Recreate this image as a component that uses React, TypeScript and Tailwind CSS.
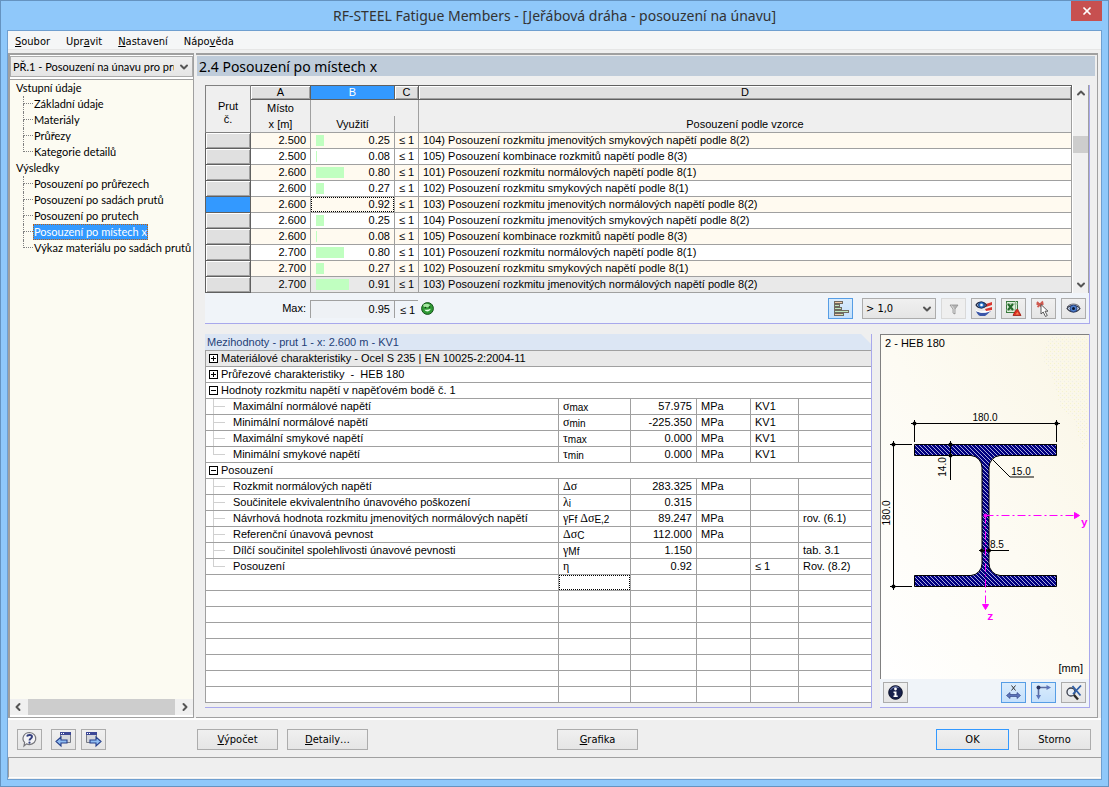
import React from "react";
import { ChevronDown, ChevronLeft, ChevronRight, ChevronUp, X } from "lucide-react";

interface CheckRow { x: string; ratio: number; text: string; selected?: boolean }
interface Detail { label: string; symbol: React.ReactNode; value: string; unit?: string; lc?: string; note?: string }
interface Group { title: string; open: boolean; items: Detail[] }

const F101 = "101) Posouzení rozkmitu normálových napětí podle 8(1)";
const F102 = "102) Posouzení rozkmitu smykových napětí podle 8(1)";
const F103 = "103) Posouzení rozkmitu jmenovitých normálových napětí podle 8(2)";
const F104 = "104) Posouzení rozkmitu jmenovitých smykových napětí podle 8(2)";
const F105 = "105) Posouzení kombinace rozkmitů napětí podle 8(3)";

const checks: CheckRow[] = [
  { x: "2.500", ratio: 0.25, text: F104 },
  { x: "2.500", ratio: 0.08, text: F105 },
  { x: "2.600", ratio: 0.8, text: F101 },
  { x: "2.600", ratio: 0.27, text: F102 },
  { x: "2.600", ratio: 0.92, text: F103, selected: true },
  { x: "2.600", ratio: 0.25, text: F104 },
  { x: "2.600", ratio: 0.08, text: F105 },
  { x: "2.700", ratio: 0.8, text: F101 },
  { x: "2.700", ratio: 0.27, text: F102 },
  { x: "2.700", ratio: 0.91, text: F103 },
];

const tree = [
  { title: "Vstupní údaje", items: ["Základní údaje", "Materiály", "Průřezy", "Kategorie detailů"] },
  {
    title: "Výsledky",
    items: [
      "Posouzení po průřezech",
      "Posouzení po sadách prutů",
      "Posouzení po prutech",
      "Posouzení po místech x",
      "Výkaz materiálu po sadách prutů",
    ],
  },
];
const activeItem = "Posouzení po místech x";

const Sub = ({ children }: { children: React.ReactNode }) => (
  <sub className="static align-[-1px] font-['Liberation_Sans',sans-serif] text-[10px] leading-none">{children}</sub>
);

const groups: Group[] = [
  { title: "Materiálové charakteristiky - Ocel S 235 | EN 10025-2:2004-11", open: false, items: [] },
  { title: "Průřezové charakteristiky  -  HEB 180", open: false, items: [] },
  {
    title: "Hodnoty rozkmitu napětí v napěťovém bodě č. 1",
    open: true,
    items: [
      { label: "Maximální normálové napětí", symbol: <>σ<Sub>max</Sub></>, value: "57.975", unit: "MPa", lc: "KV1" },
      { label: "Minimální normálové napětí", symbol: <>σ<Sub>min</Sub></>, value: "-225.350", unit: "MPa", lc: "KV1" },
      { label: "Maximální smykové napětí", symbol: <>τ<Sub>max</Sub></>, value: "0.000", unit: "MPa", lc: "KV1" },
      { label: "Minimální smykové napětí", symbol: <>τ<Sub>min</Sub></>, value: "0.000", unit: "MPa", lc: "KV1" },
    ],
  },
  {
    title: "Posouzení",
    open: true,
    items: [
      { label: "Rozkmit normálových napětí", symbol: <>Δσ</>, value: "283.325", unit: "MPa" },
      { label: "Součinitele ekvivalentního únavového poškození", symbol: <>λ<Sub>i</Sub></>, value: "0.315" },
      { label: "Návrhová hodnota rozkmitu jmenovitých normálových napětí", symbol: <>γ<Sub>Ff</Sub> Δσ<Sub>E,2</Sub></>, value: "89.247", unit: "MPa", note: "rov. (6.1)" },
      { label: "Referenční únavová pevnost", symbol: <>Δσ<Sub>C</Sub></>, value: "112.000", unit: "MPa" },
      { label: "Dílčí součinitel spolehlivosti únavové pevnosti", symbol: <>γ<Sub>Mf</Sub></>, value: "1.150", note: "tab. 3.1" },
      { label: "Posouzení", symbol: <>η</>, value: "0.92", lc: "≤ 1", note: "Rov. (8.2)" },
    ],
  },
];

const iconBtn = "flex h-[21px] w-[25px] shrink-0 items-center justify-center border border-[#acacac] bg-linear-to-b from-[#f0f0f0] to-[#e5e5e5]";
const iconBtnOn = "flex h-[21px] w-[25px] shrink-0 items-center justify-center border border-[#569de5] bg-linear-to-b from-[#daecfc] to-[#c4e0fc]";
const textBtn = "h-[21px] border border-[#acacac] bg-linear-to-b from-[#f0f0f0] to-[#e5e5e5] pt-px text-center";
const letterCell = "h-[15px] border-t border-r border-b border-[#606060] bg-[#e0e0e0] p-0 text-center font-normal leading-[13px] shadow-[inset_1px_1px_0_#fff,inset_-1px_-1px_0_#a0a0a0]";
const cell = "h-4 border-r border-b border-[#a0a0a0] px-1 py-0 leading-[15px] whitespace-nowrap";

function BarsIcon() {
  return (
    <svg width="16" height="16" viewBox="0 0 16 16" shapeRendering="crispEdges">
      <path d="M1 0.5h8.500v2H1v1h5v2H1v1h7v2H1v1h14v2H1v1h9v2H1z" fill="#bfe8bf" stroke="#6f6a60" />
      <path d="M2 1h7v1H2zM2 13h6v1H2z" fill="#efc9a8" />
    </svg>
  );
}

function FunnelIcon() {
  return (
    <svg width="14" height="14" viewBox="0 0 14 14">
      <path d="M3 3h8L8 7v5L6 11V7z" fill="#b4b4b4" stroke="#8f8f8f" strokeWidth="0.8" />
      <path d="M4.500 3.500L7 7v4" stroke="#e8e8e8" fill="none" strokeWidth="0.8" />
    </svg>
  );
}

function EyeIcon() {
  return (
    <svg width="15" height="13" viewBox="0 0 15 13">
      <path d="M1 6.500C3.500 2.500 11 2.500 14 6.500 11 11 4 11 1 6.500z" fill="#c9d6ea" stroke="#2b2f3d" strokeWidth="1.100" />
      <circle cx="7.500" cy="6.500" r="3.500" fill="#4f7fcb" stroke="#1d3674" strokeWidth="0.800" />
      <circle cx="7.500" cy="6.500" r="1.500" fill="#0b1630" />
      <path d="M1 5C4 1.200 10.500 1.200 13.500 4.500" fill="none" stroke="#55596a" strokeWidth="0.900" />
    </svg>
  );
}

function EyeFlagsIcon() {
  return (
    <svg width="18" height="17" viewBox="0 0 18 17">
      <path d="M1 11c4 2.500 11 2.500 15-1v1c-3 2-4 4-6 5H5c-2-1-3-2.500-4-5z" fill="#3a56a8" />
      <path d="M1 9.500c3 3 8 2 11 .5l5-1.500v2c-5 3-12 3-16 .5z" fill="#fff" />
      <path d="M11 4l6-2v3l-6 2zM10 9l7-2v3l-6 1z" fill="#d8362f" />
      <path d="M1 5C3.500 1 8.500 1 11.500 5 9 9 3.500 9 1 5z" fill="#b9cdea" stroke="#1e2740" strokeWidth="1.200" />
      <circle cx="6.500" cy="5" r="3" fill="#2f7bd0" stroke="#15306b" strokeWidth="0.800" />
      <circle cx="6.500" cy="5" r="1.300" fill="#fff" />
    </svg>
  );
}

function ExcelIcon() {
  return (
    <svg width="17" height="17" viewBox="0 0 17 17">
      <rect x="1.500" y="1.500" width="11" height="11" fill="#dfeedd" stroke="#3b7a3f" />
      <path d="M1 4h12M1 10h12M10.500 1v12" stroke="#8fb58d" fill="none" />
      <path d="M3 4l5 6M8 4l-5 6" stroke="#256b2c" strokeWidth="2" />
      <path d="M8 15.500c1-2 2-5 4.500-6.500 1 2.500 2.500 4 3.500 6.500z" fill="#e03020" stroke="#9a1c12" strokeWidth="0.800" />
      <path d="M10.500 14.500l2-2.500 1.500 2.500z" fill="#f08a5a" />
    </svg>
  );
}

function PickIcon() {
  return (
    <svg width="17" height="18" viewBox="0 0 17 18">
      <path d="M2 2l6 6M8 1.500L2.500 7M1.500 4h7" stroke="#cf5a50" strokeWidth="1.800" />
      <path d="M6 4.500v9.500l2.200-2 2.300 4.500 1.800-1-2.300-4.300h3z" fill="#fff" stroke="#4a4a4a" strokeWidth="0.900" />
    </svg>
  );
}

function HelpIcon() {
  return (
    <svg width="17" height="17" viewBox="0 0 17 17">
      <path d="M8.500 1.500a6.500 6 0 1 1-3 11.400L3 15l.6-3.600A6.500 6 0 0 1 8.500 1.500z" fill="#f4f4f6" stroke="#77777c" strokeWidth="1.200" />
      <path d="M6 5.500c.5-2 5-2 5 .3 0 1.700-2.500 1.700-2.500 3.700" fill="none" stroke="#35407f" strokeWidth="1.900" />
      <circle cx="8.500" cy="11.700" r="1.100" fill="#35407f" />
    </svg>
  );
}

function WindowArrowIcon({ back }: { back?: boolean }) {
  return (
    <svg width="17" height="17" viewBox="0 0 17 17">
      <path d={back ? "M5.500 2.500h10v9h-10z" : "M1.500 2.500h10v9h-10z"} fill="#d4d6dc" stroke="#777b85" />
      <path d={back ? "M5 1h11v3H5z" : "M1 1h11v3H1z"} fill="#3c4796" />
      <path d={back ? "M6 2.500h1M8 2.500h1" : "M2 2.500h1M4 2.500h1"} stroke="#fff" />
      <path
        d={back ? "M1 10.500l5-4.500v3h6v3H6V15z" : "M16 10.500L11 6v3H5v3h6V15z"}
        fill="#8fbdf2" stroke="#27408c" strokeWidth="1.100"
      />
    </svg>
  );
}

function SmileyIcon() {
  return (
    <svg width="13" height="13" viewBox="0 0 13 13">
      <circle cx="6.500" cy="6.500" r="5.900" fill="#2f9a35" stroke="#17521c" />
      <ellipse cx="5.500" cy="3.500" rx="3.300" ry="1.800" fill="#a4e6a0" />
      <circle cx="4.500" cy="5.500" r="0.800" fill="#0e3a12" />
      <circle cx="8.500" cy="5" r="0.800" fill="#0e3a12" />
      <path d="M3.500 7.500c1.500 3 5 2.500 6.200-.8-2 1-4 1.200-6.200.8z" fill="#e8ffe8" />
    </svg>
  );
}

function InfoIcon() {
  return (
    <svg width="15" height="15" viewBox="0 0 15 15">
      <circle cx="7.500" cy="7.500" r="6.800" fill="#17204c" stroke="#0a0f28" />
      <path d="M2.500 5a6 6 0 0 1 8-2.500" stroke="#7d8cc4" fill="none" />
      <circle cx="7.500" cy="4" r="1.400" fill="#fff" />
      <path d="M5.500 6.500h3v4h1.200V12H5.500v-1.500h1V8h-1z" fill="#fff" />
    </svg>
  );
}

function DimensionIcon() {
  return (
    <svg width="17" height="17" viewBox="0 0 17 17">
      <path d="M6.500 1.500l4 5M10.500 1.500l-4 5" stroke="#333" strokeWidth="1" />
      <path d="M1.500 11.500L5 8.500v2h7v-2l3.500 3-3.500 3v-2H5v2z" fill="#5b74ba" stroke="#34488a" strokeWidth="0.700" />
    </svg>
  );
}

function AxesIcon() {
  return (
    <svg width="17" height="17" viewBox="0 0 17 17">
      <path d="M3.500 3.500h9M3.500 3.500v8" stroke="#5b6ca0" strokeWidth="1.600" />
      <path d="M11.500 1l4.500 2.500L11.500 6zM1 11h5l-2.500 4.500z" fill="#5b74ba" />
      <circle cx="3.500" cy="3.500" r="2" fill="#2b3560" />
    </svg>
  );
}

function ZoomResetIcon() {
  return (
    <svg width="18" height="17" viewBox="0 0 18 17">
      <circle cx="6" cy="8" r="4" fill="#e8eef6" stroke="#3a3f4c" strokeWidth="1.300" />
      <path d="M9 11l4 4.500" stroke="#2a2a2a" strokeWidth="2.400" />
      <path d="M7.500 2l8 9.500M16 1.500L8 10" stroke="#2f5fa8" strokeWidth="1.800" />
    </svg>
  );
}

// HEB 180 cross-section with dimensions in mm
function SectionDrawing() {
  return (
    <svg className="col-start-1 row-start-1 justify-self-center self-start" width="208" height="320" viewBox="0 0 208 320" fontFamily="'Liberation Sans', sans-serif" fontSize="10">
      <defs>
        <pattern id="hatch" width="4" height="4" patternUnits="userSpaceOnUse">
          <rect width="4" height="4" fill="#000080" />
          <path d="M-1 -1l6 6M-1 3l2 2M3 -1l2 2" stroke="#d4d4f4" strokeWidth="0.800" />
        </pattern>
        <pattern id="dots" width="4" height="4" patternUnits="userSpaceOnUse">
          <rect x="1" width="1" height="1" fill="#f6f4cc" />
          <rect x="3" y="2" width="1" height="1" fill="#eeeee8" />
        </pattern>
      </defs>
      <path d="M168 2h39v104l-5 10-10-34-12-8-8-30-11-22z" fill="url(#dots)" />
      <path
        d="M33.500 109.500h142v11h-56.500a12 12 0 0 0-11 12v96a12 12 0 0 0 11 12h56.500v11h-142v-11h56.500a12 12 0 0 0 11-12v-96a12 12 0 0 0-11-12h-56.500z"
        fill="url(#hatch)" stroke="#000"
      />
      <g stroke="#000" fill="none" strokeWidth="1">
        <path d="M30 88.500h149M33.500 85v22M175.500 85v22" />
        <path d="M12.500 106v149M9 109.500h22M9 251.500h22" />
        <path d="M69.500 106v39" />
        <path d="M98 215.500h30" />
        <path d="M111.500 124.500l17.500 17.500h24" />
      </g>
      <g fill="#000">
        <circle cx="33.500" cy="88.500" r="2" /><circle cx="175.500" cy="88.500" r="2" />
        <circle cx="12.500" cy="109.500" r="2" /><circle cx="12.500" cy="251.500" r="2" />
        <circle cx="69.500" cy="109.500" r="2" /><circle cx="69.500" cy="120.500" r="2" />
        <circle cx="101" cy="215.500" r="2" /><circle cx="108" cy="215.500" r="2" />
        <text x="104" y="86" textAnchor="middle">180.0</text>
        <text x="9" y="178" textAnchor="middle" transform="rotate(-90 9 178)">180.0</text>
        <text x="65" y="132" textAnchor="middle" transform="rotate(-90 65 132)">14.0</text>
        <text x="140" y="140" textAnchor="middle">15.0</text>
        <text x="109" y="213">8.5</text>
      </g>
      <g stroke="#ff00ff" fill="#ff00ff">
        <path d="M104.500 180.500h89M104.500 180.500v89" strokeDasharray="8 3 2 3" fill="none" />
        <path d="M193.500 177.500v6l5-3zM101.500 269.500h6l-3 5z" />
        <circle cx="104.500" cy="180.500" r="1.500" />
      </g>
      <g fill="#ff00ff" fontFamily="'Liberation Mono', monospace" fontWeight="bold" fontSize="11">
        <text x="200" y="191">y</text>
        <text x="106" y="285">z</text>
      </g>
    </svg>
  );
}

function Sidebar() {
  return (
    <aside className="flex w-[186px] shrink-0 flex-col border-t-2 border-r border-b border-l-2 border-[#a0a0a0] bg-white pt-px font-['Lato','Noto_Sans',sans-serif]">
      <div className="grid h-[21px] border border-[#acacac] bg-linear-to-b from-[#f0f0f0] to-[#e5e5e5]">
        <select aria-label="Případ" className="col-start-1 row-start-1 w-full appearance-none overflow-hidden pr-[18px] pl-0.5 leading-[19px] outline-none">
          <option>PŘ.1 - Posouzení na únavu pro pru</option>
        </select>
        <ChevronDown className="pointer-events-none col-start-1 row-start-1 mr-0.5 self-center justify-self-end text-[#555]" size={12} strokeWidth={4} />
      </div>
      <nav className="mt-0.5 flex-1 overflow-hidden border-t border-[#a0a0a0] bg-[#fcfbf2]">
        {tree.map((g) => (
          <div key={g.title}>
            <div className="h-4 pl-1.5 leading-4">{g.title}</div>
            <ul>
              {g.items.map((item, i) => (
                <li key={item} className="flex h-4 pl-[13px] whitespace-nowrap">
                  <span className="w-2.5 shrink-0">
                    <span className="block h-2 border-b border-l border-dotted border-[#808080]" />
                    {i < g.items.length - 1 && <span className="block h-2 border-l border-dotted border-[#808080]" />}
                  </span>
                  {item === activeItem ? (
                    <a href="#" className="h-4 border border-dotted border-[#c06010] bg-[#3399ff] leading-[14px] text-white">{item}</a>
                  ) : (
                    <a href="#" className="pl-px leading-4">{item}</a>
                  )}
                </li>
              ))}
            </ul>
          </div>
        ))}
      </nav>
      <div className="mb-0.5 flex h-4 items-center bg-[#f0f0f0] text-[#555]">
        <ChevronLeft size={12} strokeWidth={4} className="mx-0.5 shrink-0" />
        <div className="mx-0.5 h-4 flex-1 bg-[#cdcdcd]" />
        <ChevronRight size={12} strokeWidth={4} className="mx-0.5 shrink-0" />
      </div>
    </aside>
  );
}

function rowColor(i: number) {
  if (i === checks.length - 1) return "bg-[#e9e9e9]";
  return i % 2 ? "bg-white" : "bg-[#fffaf0]";
}

function ChecksTable() {
  return (
    <table className="w-full min-w-0 flex-1 table-fixed border-separate border-spacing-0">
      <colgroup>
        <col className="w-[46px]" />
        <col className="w-[60px]" />
        <col className="w-[84px]" />
        <col className="w-[24px]" />
        <col />
      </colgroup>
      <thead className="bg-[#efefef]">
        <tr>
          <th rowSpan={3} className="border border-[#808080] p-0 pt-2 font-normal leading-[13px]">Prut<br />č.</th>
          <th className={letterCell}>A</th>
          <th className="h-[15px] border-t border-r border-b border-[#606060] bg-[#3399ff] p-0 text-center font-normal leading-[13px] text-white">B</th>
          <th className={letterCell}>C</th>
          <th className={letterCell}>D</th>
        </tr>
        <tr>
          <th className="h-4 border-r border-[#a0a0a0] p-0 font-normal leading-4">Místo</th>
          <th className="h-4 p-0" />
          <th className="h-4 border-r border-[#a0a0a0] p-0" />
          <th className="h-4 border-r border-[#a0a0a0] p-0" />
        </tr>
        <tr>
          <th className="h-[17px] border-r border-b border-[#a0a0a0] p-0 font-normal leading-4">x [m]</th>
          <th className="h-[17px] border-r border-b border-[#a0a0a0] p-0 font-normal leading-4">Využití</th>
          <th className="h-[17px] border-r border-b border-[#a0a0a0] p-0" />
          <th className="h-[17px] border-r border-b border-[#a0a0a0] p-0 font-normal leading-4">Posouzení podle vzorce</th>
        </tr>
      </thead>
      <tbody>
        {checks.map((row, i) => (
          <tr key={i} className={rowColor(i)}>
            <td
              className={
                row.selected
                  ? "h-4 border-r border-b border-l border-[#606060] bg-[#3399ff] p-0"
                  : "h-4 border-r border-b border-l border-[#606060] bg-[#e0e0e0] p-0 shadow-[inset_1px_1px_0_#fff,inset_-1px_-1px_0_#a0a0a0]"
              }
            />
            <td className={`${cell} text-right`}>{row.x}</td>
            <td className="h-4 border-r border-b border-[#a0a0a0] p-0 leading-[15px]">
              {row.selected ? (
                <div className="h-[15px] border border-dotted border-black pr-[3px] text-right leading-[13px]">{row.ratio.toFixed(2)}</div>
              ) : (
                <div className="flex h-[15px] items-center justify-between pr-1 pl-[5px]">
                  <span className="h-[11px] bg-[#c0ffc0]" style={{ width: Math.max(1, Math.round(row.ratio * 38 - 2)) }} />
                  <span>{row.ratio.toFixed(2)}</span>
                </div>
              )}
            </td>
            <td className={cell}>≤ 1</td>
            <td className={cell}>{row.text}</td>
          </tr>
        ))}
      </tbody>
    </table>
  );
}

function DetailsTable() {
  return (
    <table className="w-full table-fixed border-separate border-spacing-0 border-t border-l border-[#a0a0a0] bg-white">
      <colgroup>
        <col />
        <col className="w-[72px]" />
        <col className="w-[66px]" />
        <col className="w-[54px]" />
        <col className="w-[48px]" />
        <col className="w-[72px]" />
      </colgroup>
      <tbody>
        {groups.map((g, gi) => (
          <React.Fragment key={g.title}>
            <tr className={gi === 0 ? "bg-[#e9e9e9]" : "bg-white"}>
              <td colSpan={6} className="h-4 border-b border-[#a0a0a0] p-0 leading-[15px]">
                <div className="flex h-[15px] items-center gap-[3px] pl-[3px] whitespace-pre">
                  <svg width="9" height="9" viewBox="0 0 9 9" shapeRendering="crispEdges">
                    <rect x="0.500" y="0.500" width="8" height="8" fill="#fff" stroke="#000" />
                    <path d={g.open ? "M2 4.500h5" : "M2 4.500h5M4.500 2v5"} stroke="#000" />
                  </svg>
                  {g.title}
                </div>
              </td>
            </tr>
            {g.items.map((d, i) => (
              <tr key={d.label}>
                <td className="h-4 border-r border-b border-[#a0a0a0] p-0 leading-[15px] whitespace-nowrap">
                  <div className="flex h-[15px] gap-2 pl-[7px]">
                    <span className="w-3">
                      <span className="block h-2 border-b border-l border-[#d0d0d0]" />
                      {i < g.items.length - 1 && <span className="block h-[7px] border-l border-[#d0d0d0]" />}
                    </span>
                    {d.label}
                  </div>
                </td>
                <td className={cell}>
                  <div className="h-[15px] overflow-hidden font-['Liberation_Serif',serif] text-xs leading-[15px]">{d.symbol}</div>
                </td>
                <td className={`${cell} text-right`}>{d.value}</td>
                <td className={cell}>{d.unit}</td>
                <td className={cell}>{d.lc}</td>
                <td className="h-4 border-b border-[#a0a0a0] px-1 py-0 leading-[15px] whitespace-nowrap">{d.note}</td>
              </tr>
            ))}
          </React.Fragment>
        ))}
        {Array.from({ length: 8 }, (_, i) => (
          <tr key={i}>
            <td className={cell} />
            <td className="h-4 border-r border-b border-[#a0a0a0] p-0">
              {i === 0 && <div className="h-[15px] border border-dotted border-black" />}
            </td>
            <td className={cell} />
            <td className={cell} />
            <td className={cell} />
            <td className="h-4 border-b border-[#a0a0a0] p-0" />
          </tr>
        ))}
      </tbody>
    </table>
  );
}

function FilterBar() {
  return (
    <div className="flex h-[30px] items-center bg-[#f0f4f9] pt-px pr-[3px]">
      <span className="w-[105px] pr-1 text-right">Max:</span>
      <output className="h-[18px] w-[84px] border-t border-l border-[#a0a0a0] bg-[#eef1f5] pr-1 text-right leading-[17px]">0.95</output>
      <span className="h-[18px] w-6 border-t border-l border-[#a0a0a0] pl-[5px] leading-[18px]">≤ 1</span>
      <span className="ml-[3px]"><SmileyIcon /></span>
      <div className="ml-auto flex items-center gap-[5px]">
        <button type="button" aria-label="Grafy využití" className={iconBtnOn}><BarsIcon /></button>
        <div className="ml-1 grid h-[21px] w-[74px] border border-[#acacac] bg-linear-to-b from-[#f0f0f0] to-[#e5e5e5]">
          <select aria-label="Filtr využití" className="col-start-1 row-start-1 w-full appearance-none pl-[3px] font-['DejaVu_Sans_Condensed',sans-serif] text-[11px] leading-[19px] outline-none">
            <option>&gt; 1,0</option>
          </select>
          <ChevronDown className="pointer-events-none col-start-1 row-start-1 mr-0.5 self-center justify-self-end text-[#555]" size={12} strokeWidth={4} />
        </div>
        <button type="button" aria-label="Filtr" disabled className="flex h-[21px] w-[25px] items-center justify-center border border-[#d9d9d9] bg-[#efefef]"><FunnelIcon /></button>
        <button type="button" aria-label="Barevné stupně" className={iconBtn}><EyeFlagsIcon /></button>
        <button type="button" aria-label="Export do Excelu" className={iconBtn}><ExcelIcon /></button>
        <button type="button" aria-label="Vybrat prut" className={iconBtn}><PickIcon /></button>
        <button type="button" aria-label="Zobrazit" className={iconBtn}><EyeIcon /></button>
      </div>
    </div>
  );
}

export default function App() {
  return (
    <div className="flex min-h-screen flex-col border border-[#6593c0] bg-[#8fc8fa] px-1.5 pb-1.5 font-['DejaVu_Sans_Condensed','Noto_Sans',sans-serif] text-[11px] text-black">
      <header className="flex h-[29px] items-start">
        <span className="w-[31px]" />
        <h1 className="flex-1 text-center font-['Noto_Sans',sans-serif] text-sm leading-[29px] text-[#333]">
          RF-STEEL Fatigue Members - [Jeřábová dráha - posouzení na únavu]
        </h1>
        <button type="button" aria-label="Zavřít" className="flex h-5 w-[31px] items-center justify-center bg-[#c75050] text-white">
          <X size={12} strokeWidth={3.5} />
        </button>
      </header>

      <div className="flex flex-1 flex-col border border-[#6f9fd0] bg-[#efefef]">
        <nav className="flex h-[19px] gap-4 border-b border-[#e6e6e6] bg-[#f5f6f7] pl-[7px] leading-[22px]">
          <a href="#"><u>S</u>oubor</a>
          <a href="#">Upr<u>a</u>vit</a>
          <a href="#"><u>N</u>astavení</a>
          <a href="#">Nápo<u>v</u>ěda</a>
        </nav>

        <main className="mt-[3px] flex flex-1 gap-0.5 pr-[3px]">
          <Sidebar />

          <section className="flex min-w-0 flex-1 flex-col border-t-2 border-r border-b border-[#a0a0a0] pt-px pl-px">
            <h2 className="mr-0.5 h-5 bg-[#bfccda] pl-0.5 font-['Noto_Sans',sans-serif] text-sm leading-[22px]">2.4 Posouzení po místech x</h2>

            <div className="flex flex-1 flex-col gap-2.5 pt-[9px] pr-[7px] pb-[9px] pl-2 font-['Liberation_Sans',sans-serif]">
              <div className="border-r border-b border-[#a8a8ec]">
                <div className="flex">
                  <ChecksTable />
                  <div className="flex w-[17px] shrink-0 flex-col items-center justify-between border-r border-l border-r-[#a0a0a0] border-l-white bg-[#f0f0f0] text-[#555]">
                    <ChevronUp size={12} strokeWidth={4} className="mt-0.5" />
                    <div className="mt-[37px] mb-auto h-[17px] w-full bg-[#cdcdcd]" />
                    <ChevronDown size={12} strokeWidth={4} className="mb-0.5" />
                  </div>
                </div>
                <FilterBar />
              </div>

              <div className="flex flex-1 gap-2">
                <div className="min-w-0 flex-1 border-r border-b border-[#a8a8ec] bg-[#efefef]">
                  <h3 className="h-4 bg-[#dce6f4] pl-0.5 leading-4 text-[#1f3f77] [clip-path:polygon(0_0,calc(100%-10px)_0,100%_10px,100%_100%,0_100%)]">
                    Mezihodnoty - prut 1 - x: 2.600 m - KV1
                  </h3>
                  <DetailsTable />
                </div>

                <div className="flex w-[210px] shrink-0 flex-col border-r border-b border-[#a8a8ec]">
                  <div className="grid flex-1 grid-rows-[1fr] border-t border-l border-[#808080] bg-linear-to-tr from-white via-[#fdfbf3] to-[#faf6e6]">
                    <SectionDrawing />
                    <div className="col-start-1 row-start-1 flex flex-col justify-between px-1 py-0.5 leading-3">
                      <span>2 - HEB 180</span>
                      <span className="self-end pr-0.5 pb-[3px]">[mm]</span>
                    </div>
                  </div>
                  <div className="flex h-7 items-center gap-[5px] bg-[#f0f4f9] pr-[3px] pb-px pl-[3px]">
                    <button type="button" aria-label="Informace" className={iconBtn}><InfoIcon /></button>
                    <button type="button" aria-label="Kóty" className={`${iconBtnOn} ml-auto`}><DimensionIcon /></button>
                    <button type="button" aria-label="Osy" className={iconBtnOn}><AxesIcon /></button>
                    <button type="button" aria-label="Celé zobrazení" className={iconBtn}><ZoomResetIcon /></button>
                  </div>
                </div>
              </div>
            </div>
          </section>
        </main>

        <footer className="flex border-t-2 border-white pt-[9px] pr-2.5 pb-[7px] pl-[9px]">
          <div className="flex w-[180px] gap-[5px]">
            <button type="button" aria-label="Nápověda" className={`${iconBtn} mr-1`}><HelpIcon /></button>
            <button type="button" aria-label="Předchozí" className={iconBtn}><WindowArrowIcon back /></button>
            <button type="button" aria-label="Další" className={iconBtn}><WindowArrowIcon /></button>
          </div>
          <div className="flex w-[360px] gap-[9px]">
            <button type="button" className={`${textBtn} w-[81px]`}><u>V</u>ýpočet</button>
            <button type="button" className={`${textBtn} w-[81px]`}><u>D</u>etaily…</button>
          </div>
          <button type="button" className={`${textBtn} w-[81px]`}><u>G</u>rafika</button>
          <div className="flex flex-1 justify-end gap-[9px]">
            <button type="button" className="h-[21px] w-[73px] border border-[#3399ff] bg-linear-to-b from-[#f0f0f0] to-[#e5e5e5] pt-px text-center">OK</button>
            <button type="button" className={`${textBtn} w-[73px]`}>Storno</button>
          </div>
        </footer>
        <div className="mb-px h-[21px] border-t border-b border-l border-t-[#a0a0a0] border-b-white border-l-[#a0a0a0]" />
      </div>
    </div>
  );
}
